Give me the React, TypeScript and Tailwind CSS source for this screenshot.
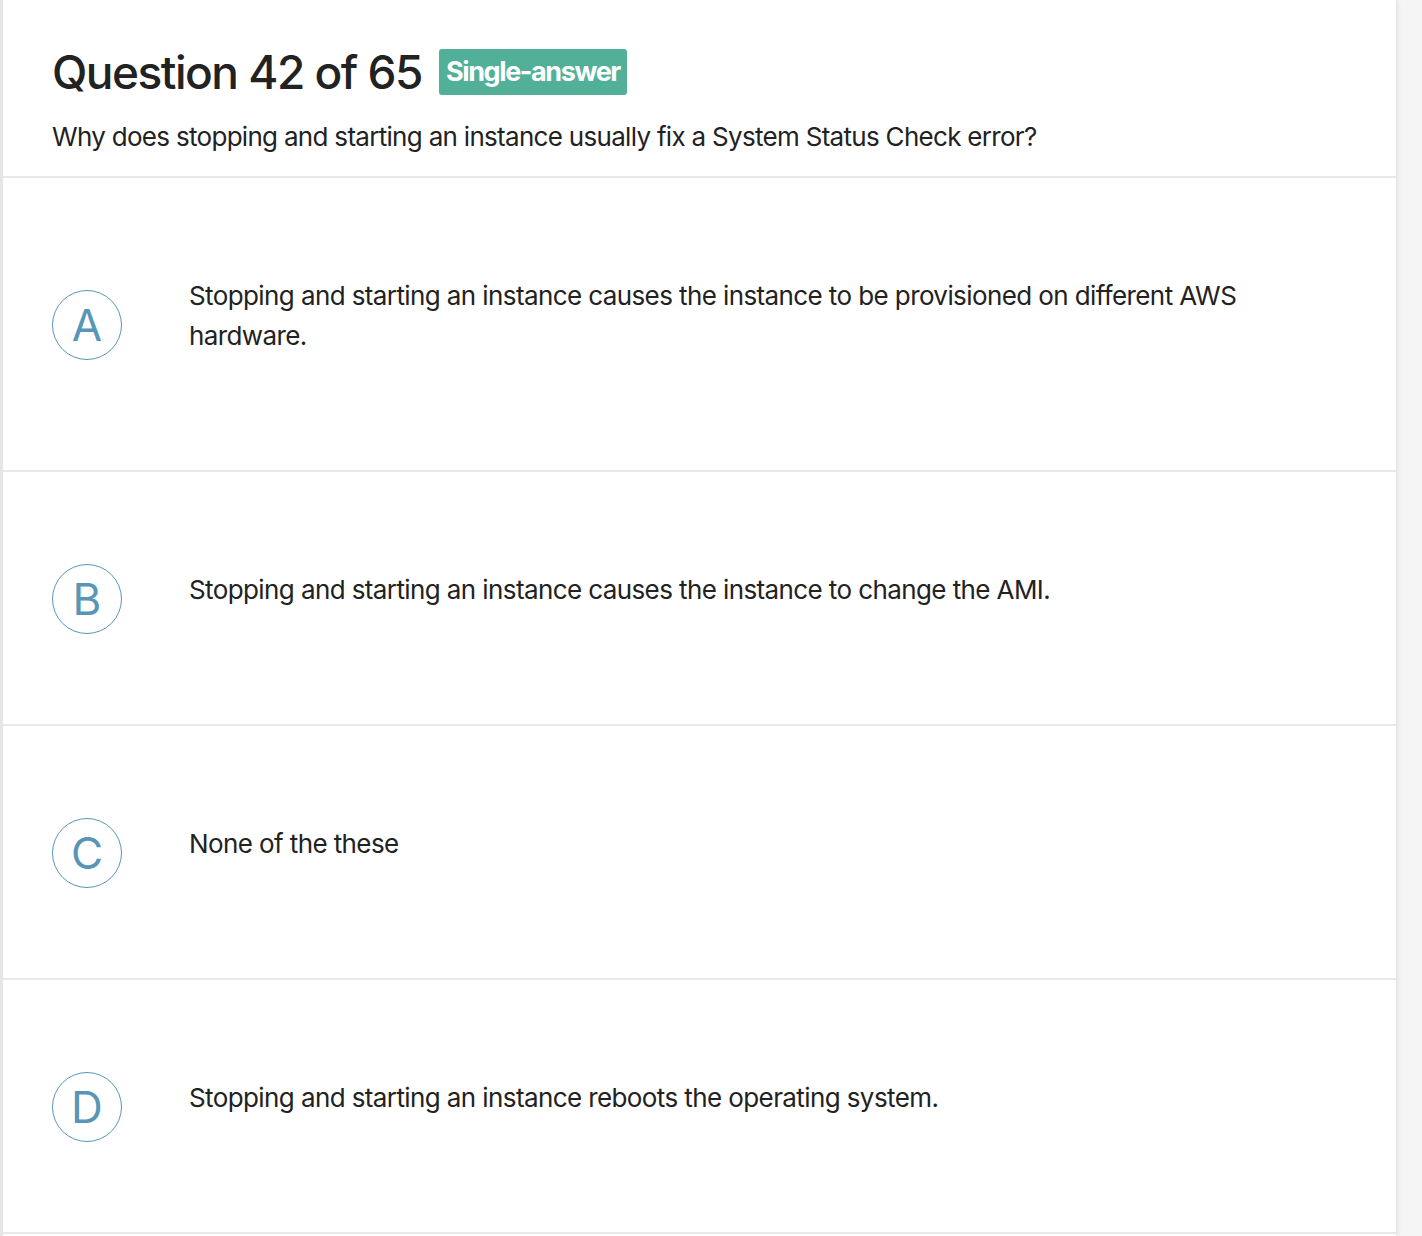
import React from 'react';

const options = [
  { letter: 'A', text: 'Stopping and starting an instance causes the instance to be provisioned on different AWS hardware.' },
  { letter: 'B', text: 'Stopping and starting an instance causes the instance to change the AMI.' },
  { letter: 'C', text: 'None of the these' },
  { letter: 'D', text: 'Stopping and starting an instance reboots the operating system.' },
];

const App: React.FC = () => {
  return (
    <div className="min-h-screen bg-[#f5f5f5] flex" style={{ fontFamily: 'Inter, "Noto Sans", sans-serif' }}>
      <div className="w-[1396px] bg-white border-l-[3px] border-[#e6e6e6] shadow-[2px_0_4px_rgba(0,0,0,0.08)]">
        {/* header */}
        <div className="h-[178px] px-[49px] pt-[44px] border-b-2 border-[#e8e8e8]">
          <div className="flex items-center">
            <h1 className="text-[46px] leading-[56px] font-medium text-[#222] tracking-[-1.5px]">Question 42 of 65</h1>
            <span className="ml-[17px] h-[46px] px-[7px] flex items-center bg-[#52b099] rounded-[3px] text-white text-[27px] font-bold tracking-[-1.4px]">
              Single-answer
            </span>
          </div>
          <p className="mt-[17px] text-[26px] leading-[40px] text-[#222] tracking-[-0.7px]">
            Why does stopping and starting an instance usually fix a System Status Check error?
          </p>
        </div>

        {options.map((opt) => (
          <div key={opt.letter} className="flex items-center px-[49px] pt-[98px] pb-[96px] border-b-2 border-[#e8e8e8]">
            <div className="w-[70px] h-[70px] -my-[6px] shrink-0 rounded-full border-[1.75px] border-[#5896b6] flex items-center justify-center text-[44px] font-normal text-[#5896b6]">
              {opt.letter}
            </div>
            <p className="ml-[67px] mb-[18px] max-w-[1090px] text-[26px] leading-[40px] text-[#222] tracking-[-0.6px]">
              {opt.text}
            </p>
          </div>
        ))}
      </div>
    </div>
  );
};

export default App;
